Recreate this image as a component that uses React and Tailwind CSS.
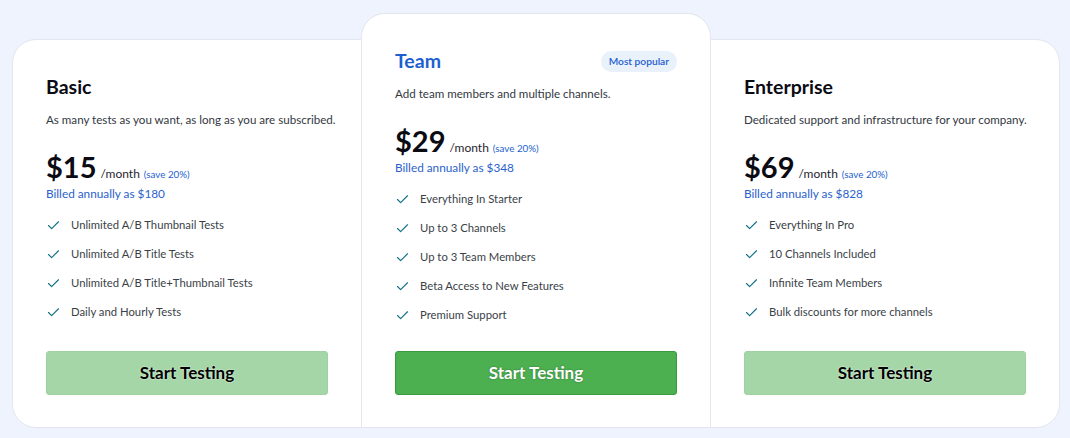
// pricing cards: Basic / Team (popular) / Enterprise
import { Check } from "lucide-react";

const plans = [
  {
    name: "Basic",
    desc: "As many tests as you want, as long as you are subscribed.",
    price: "$15",
    billed: "Billed annually as $180",
    features: [
      "Unlimited A/B Thumbnail Tests",
      "Unlimited A/B Title Tests",
      "Unlimited A/B Title+Thumbnail Tests",
      "Daily and Hourly Tests",
    ],
  },
  {
    name: "Team",
    popular: true,
    desc: "Add team members and multiple channels.",
    price: "$29",
    billed: "Billed annually as $348",
    features: [
      "Everything In Starter",
      "Up to 3 Channels",
      "Up to 3 Team Members",
      "Beta Access to New Features",
      "Premium Support",
    ],
  },
  {
    name: "Enterprise",
    desc: "Dedicated support and infrastructure for your company.",
    price: "$69",
    billed: "Billed annually as $828",
    features: [
      "Everything In Pro",
      "10 Channels Included",
      "Infinite Team Members",
      "Bulk discounts for more channels",
    ],
  },
];

function Card({ plan, className }) {
  return (
    <div
      className={
        "flex flex-col border border-[#e3e6ec] bg-white px-[33px] pb-[32px] " +
        className
      }
    >
      <div className="mt-[35px] flex h-[24px] items-center justify-between">
        <h2
          className={
            "text-[19.5px] font-bold leading-none " +
            (plan.popular ? "text-[#1d5fd0]" : "text-[#0b0b14]")
          }
        >
          {plan.name}
        </h2>
        {plan.popular && (
          <span className="rounded-full bg-[#e9f1fa] px-[8px] py-[4px] text-[10.2px] font-semibold leading-[13px] text-[#1d5fd0]">
            Most popular
          </span>
        )}
      </div>
      <p className="mt-[11px] whitespace-nowrap text-[11.6px] leading-[20px] text-[#333842]">
        {plan.desc}
      </p>
      <div className="mt-[20px] flex items-baseline">
        <span className="text-[29px] font-bold leading-[34px] text-[#0b0b14]">
          {plan.price}
        </span>
        <span className="ml-[4px] text-[12px] text-[#1f2430]">/month</span>
        <span className="ml-[4px] text-[9.8px] text-[#1d5fd0]">(save 20%)</span>
      </div>
      <div className="mt-[1px] text-[11.8px] leading-[18px] text-[#2a62cc]">
        {plan.billed}
      </div>
      <ul className="mt-[12px] flex flex-col gap-[9px]">
        {plan.features.map((f) => (
          <li
            key={f}
            className="flex h-[20px] items-center whitespace-nowrap text-[11.3px] text-[#3a3f48]"
          >
            <Check
              className="mr-[10px] h-[15px] w-[15px] text-[#11708a]"
              strokeWidth={1.8}
            />
            {f}
          </li>
        ))}
      </ul>
      <button
        className={
          "mt-auto h-[44px] w-full rounded-[3px] border text-[17px] font-bold " +
          (plan.popular
            ? "border-[#3a9b3e] bg-[#4caf50] text-white [text-shadow:0_0_2px_rgba(0,0,0,0.35)]"
            : "border-[#9fd1a1] bg-[#a5d6a7] text-black [text-shadow:0_0_2px_rgba(255,255,255,0.9)]")
        }
      >
        Start Testing
      </button>
    </div>
  );
}

export default function App() {
  return (
    <div
      className="flex h-[438px] w-full items-end bg-[#eef3fd] pb-[10px] pl-[12px]"
      style={{ fontFamily: 'Lato, "Noto Sans", sans-serif' }}
    >
      <Card plan={plans[0]} className="h-[389px] w-[350px] rounded-l-[24px]" />
      <Card
        plan={plans[1]}
        className="-ml-px h-[415px] w-[350px] rounded-t-[24px]"
      />
      <Card
        plan={plans[2]}
        className="-ml-px h-[389px] w-[350px] rounded-r-[24px]"
      />
    </div>
  );
}
